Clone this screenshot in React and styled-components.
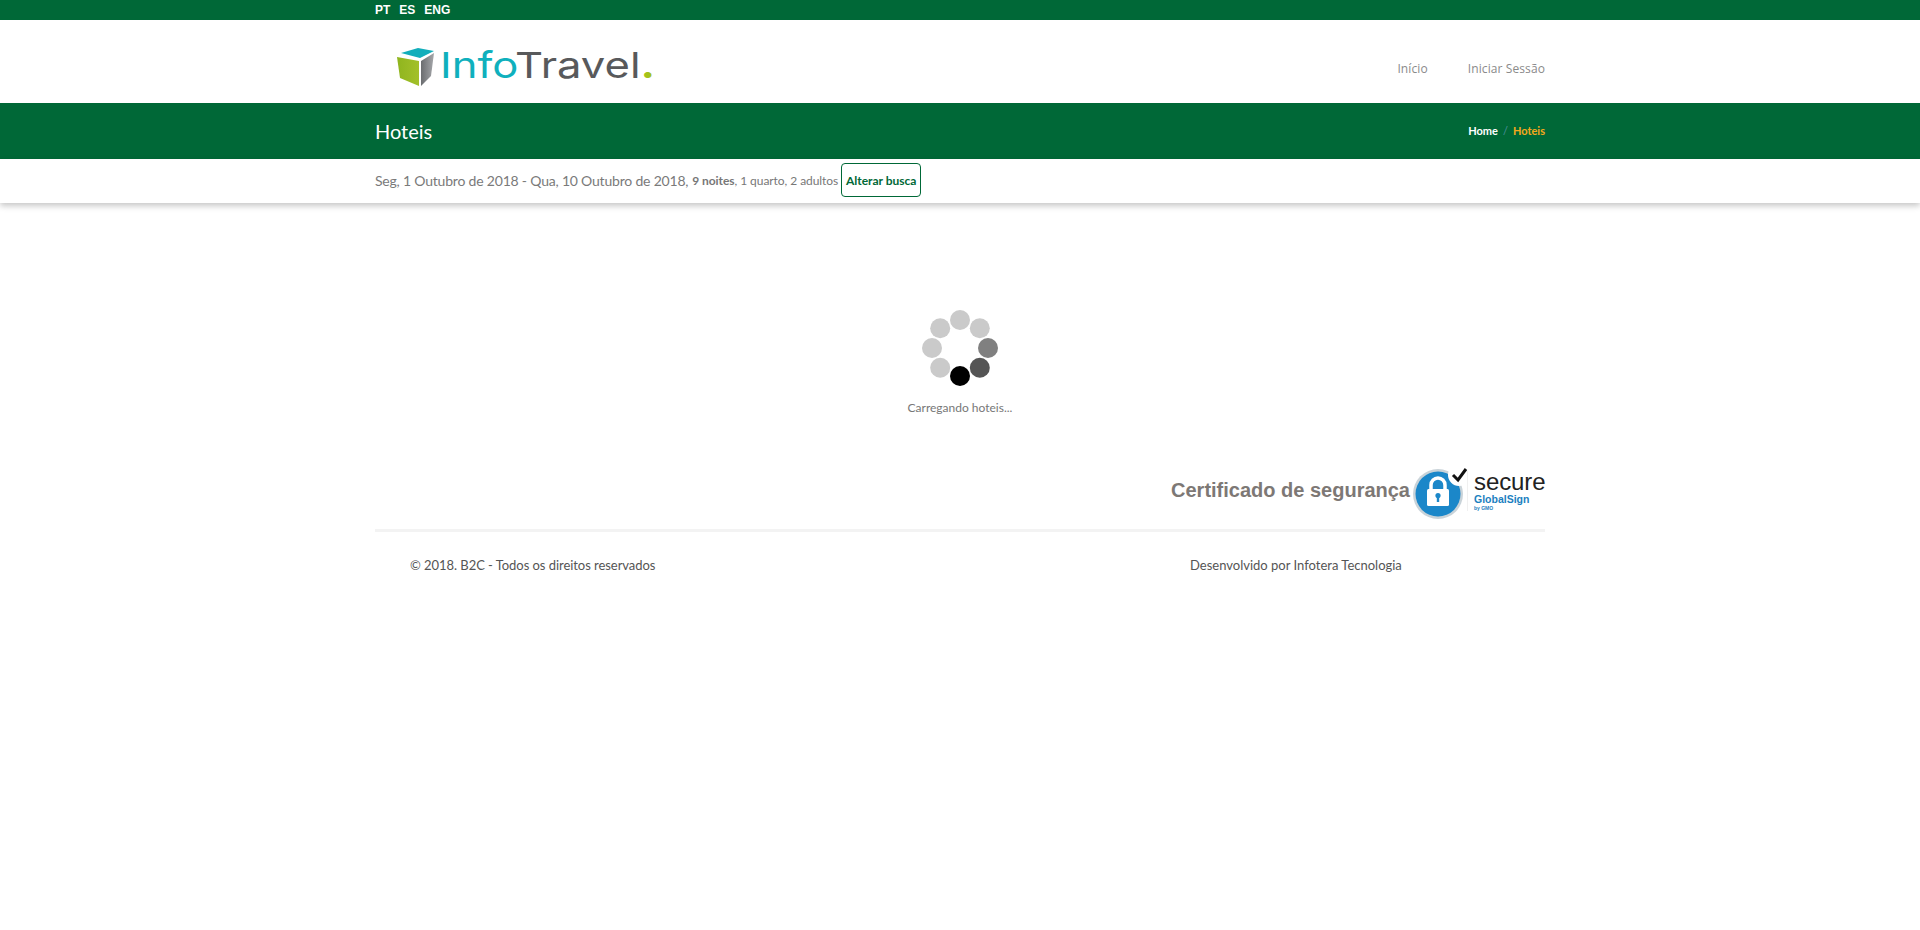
import React from 'react';
import styled, { createGlobalStyle } from 'styled-components';

const GREEN = '#006837';

const GlobalStyle = createGlobalStyle`
  html, body { margin: 0; padding: 0; background: #fff; }
  body { font-family: Lato, "Open Sans", sans-serif; color: #777; }
`;

const Container = styled.div`
  width: 1200px;
  margin: 0 auto;
  padding: 0 15px;
  box-sizing: border-box;
  display: flex;
  align-items: center;
  justify-content: space-between;
`;

const TopBar = styled.div`
  height: 20px;
  background: ${GREEN};
`;

const Langs = styled.div`
  display: flex;
  gap: 9px;
  font: bold 12px/20px "Liberation Sans", sans-serif;
  color: #fff;
`;

const Header = styled.header`
  height: 83px;
  background: #fff;
`;

const HeaderRow = styled(Container)`
  height: 83px;
  align-items: flex-start;
`;

const Logo = styled.div`
  display: flex;
  align-items: flex-start;
  margin: 28px 0 0 22px;
`;

const LogoText = styled.div`
  font: 400 36px/34px Inter, sans-serif;
  margin-left: 5px;
  white-space: nowrap;
  color: #0fb0bd;
  transform: scaleX(1.21);
  transform-origin: left center;
`;

const LogoGray = styled.span`
  color: #58595b;
`;

const LogoDot = styled.span`
  color: #a4c21a;
  font-weight: 700;
`;

const Nav = styled.nav`
  display: flex;
  gap: 40px;
  margin-top: 41px;
  font: 400 12px/16px "Open Sans", sans-serif;
  letter-spacing: 0.1px;
  color: #8a8a8a;
`;

const TitleBar = styled.div`
  height: 56px;
  background: ${GREEN};
`;

const TitleRow = styled(Container)`
  height: 56px;
`;

const Title = styled.h1`
  margin: 0;
  font: 400 20px/28px Lato, sans-serif;
  color: #fff;
`;

const Crumbs = styled.div`
  display: flex;
  gap: 5px;
  font: 700 11px/16px Lato, sans-serif;
  color: #fff;
`;

const CrumbSep = styled.span`
  color: #4f8f9f;
  font-weight: 400;
`;

const CrumbActive = styled.span`
  color: #f5a81c;
`;

const SearchBar = styled.div`
  height: 44px;
  background: #fff;
  box-shadow: 0 3px 6px rgba(0, 0, 0, 0.22);
`;

const SearchRow = styled(Container)`
  height: 42px;
  justify-content: flex-start;
`;

const Dates = styled.span`
  font-size: 14px;
  letter-spacing: -0.2px;
  color: #7a7a7a;
`;

const Summary = styled.span`
  font-size: 12px;
  letter-spacing: -0.06px;
  color: #777;
  margin-left: 4px;
  b { font-weight: 700; }
`;

const ChangeButton = styled.button`
  height: 34px;
  width: 80px;
  margin-left: 3px;
  padding: 0;
  background: #fff;
  border: 1px solid ${GREEN};
  border-radius: 4px;
  color: ${GREEN};
  font: 700 12px Lato, sans-serif;
`;

const Loading = styled.div`
  display: flex;
  flex-direction: column;
  align-items: center;
  padding-top: 105px;
`;

const LoadingText = styled.div`
  margin-top: 12px;
  font-size: 12px;
  line-height: 16px;
  color: #777;
`;

const Secure = styled(Container)`
  justify-content: flex-end;
  margin-top: 50px;
  height: 54px;
`;

const SecureLabel = styled.span`
  font: bold 20px "Liberation Sans", sans-serif;
  color: #7d7875;
  margin: -5px 2px 0 0;
`;

const SealText = styled.div`
  display: flex;
  flex-direction: column;
  width: 71px;
  margin: -4px 0 0 -1px;
  padding-left: 6px;
  border-left: 1px solid #f0f0f0;
`;

const SealWord = styled.span`
  font: 400 24px/22px "Liberation Sans", sans-serif;
  letter-spacing: -0.1px;
  color: #222;
`;

const SealBrand = styled.span`
  font: bold 10.5px/12px "Liberation Sans", sans-serif;
  color: #1b7fc0;
`;

const SealBy = styled.span`
  font: bold 5px/6px "Liberation Sans", sans-serif;
  color: #1b7fc0;
`;

const Rule = styled.hr`
  width: 1200px;
  box-sizing: border-box;
  margin: 9px auto 0;
  border: 0;
  height: 3px;
  background: #f3f3f3;
  background-clip: content-box;
  padding: 0 15px;
`;

const Footer = styled.footer`
  width: 1200px;
  margin: 24px auto 0;
  padding: 0 15px;
  box-sizing: border-box;
  display: grid;
  grid-template-columns: 780px 1fr;
  font-size: 13px;
  letter-spacing: -0.05px;
  line-height: 18px;
  color: #555;
`;

const FooterLeft = styled.span`
  padding-left: 35px;
`;

const FooterRight = styled.span`
  padding-left: 35px;
  letter-spacing: 0;
`;

const Cube = () => (
  <svg width="38" height="38" viewBox="0 0 38 38">
    <defs>
      <linearGradient id="cubeLeft" x1="0" x2="1" y1="0" y2="0">
        <stop offset="0" stopColor="#8fb51e" />
        <stop offset="1" stopColor="#a3c02a" />
      </linearGradient>
      <linearGradient id="cubeRight" x1="0" x2="1" y1="0" y2="0">
        <stop offset="0" stopColor="#6b6d70" />
        <stop offset="1" stopColor="#a5a7aa" />
      </linearGradient>
    </defs>
    <path d="M4 5 L21 0 L37 3 L23 10 Z" fill="#12aebb" />
    <path d="M0 9 L22 13 L22 38 L3 30 Z" fill="url(#cubeLeft)" />
    <path d="M24 13 L37 5 L34 28 L24 38 Z" fill="url(#cubeRight)" />
  </svg>
);

const SPINNER_DOTS = [
  [0, '#cacaca'], [45, '#cacaca'], [90, '#808080'], [135, '#555555'],
  [180, '#000000'], [225, '#cacaca'], [270, '#cacaca'], [315, '#cacaca'],
];

const Spinner = () => (
  <svg width="80" height="80" viewBox="-40 -40 80 80">
    {SPINNER_DOTS.map(([deg, color]) => (
      <circle
        key={deg}
        r="10"
        cx={28 * Math.sin((deg * Math.PI) / 180)}
        cy={-28 * Math.cos((deg * Math.PI) / 180)}
        fill={color}
      />
    ))}
  </svg>
);

const Seal = () => (
  <svg width="56" height="54" viewBox="0 0 56 54">
    <circle cx="26" cy="28" r="25" fill="#c9d3d9" />
    <circle cx="26" cy="28" r="22.5" fill="#1b87c9" />
    <circle cx="47" cy="9" r="11" fill="#fff" />
    <path d="M41 9 L46 14 L54 3" fill="none" stroke="#111" strokeWidth="3" />
    <path d="M19 23 V19 a7 7 0 0 1 14 0 V23" fill="none" stroke="#fff" strokeWidth="3.5" />
    <rect x="15" y="23" width="22" height="17" rx="1.5" fill="#fff" />
    <circle cx="26" cy="29.5" r="2.6" fill="#1b87c9" />
    <rect x="24.8" y="30" width="2.4" height="6" fill="#1b87c9" />
  </svg>
);

export default function App() {
  return (
    <>
      <GlobalStyle />
      <TopBar>
        <Container>
          <Langs>
            <span>PT</span>
            <span>ES</span>
            <span>ENG</span>
          </Langs>
        </Container>
      </TopBar>
      <Header>
        <HeaderRow>
          <Logo>
            <Cube />
            <LogoText>
              Info<LogoGray>Travel</LogoGray><LogoDot>.</LogoDot>
            </LogoText>
          </Logo>
          <Nav>
            <span>Início</span>
            <span>Iniciar Sessão</span>
          </Nav>
        </HeaderRow>
      </Header>
      <TitleBar>
        <TitleRow>
          <Title>Hoteis</Title>
          <Crumbs>
            <span>Home</span>
            <CrumbSep>/</CrumbSep>
            <CrumbActive>Hoteis</CrumbActive>
          </Crumbs>
        </TitleRow>
      </TitleBar>
      <SearchBar>
        <SearchRow>
          <Dates>Seg, 1 Outubro de 2018 - Qua, 10 Outubro de 2018,</Dates>
          <Summary><b>9 noites</b>, 1 quarto, 2 adultos</Summary>
          <ChangeButton>Alterar busca</ChangeButton>
        </SearchRow>
      </SearchBar>
      <Loading>
        <Spinner />
        <LoadingText>Carregando hoteis...</LoadingText>
      </Loading>
      <Secure>
        <SecureLabel>Certificado de segurança</SecureLabel>
        <Seal />
        <SealText>
          <SealWord>secure</SealWord>
          <SealBrand>GlobalSign</SealBrand>
          <SealBy>by GMO</SealBy>
        </SealText>
      </Secure>
      <Rule />
      <Footer>
        <FooterLeft>© 2018. B2C - Todos os direitos reservados</FooterLeft>
        <FooterRight>Desenvolvido por Infotera Tecnologia</FooterRight>
      </Footer>
    </>
  );
}
